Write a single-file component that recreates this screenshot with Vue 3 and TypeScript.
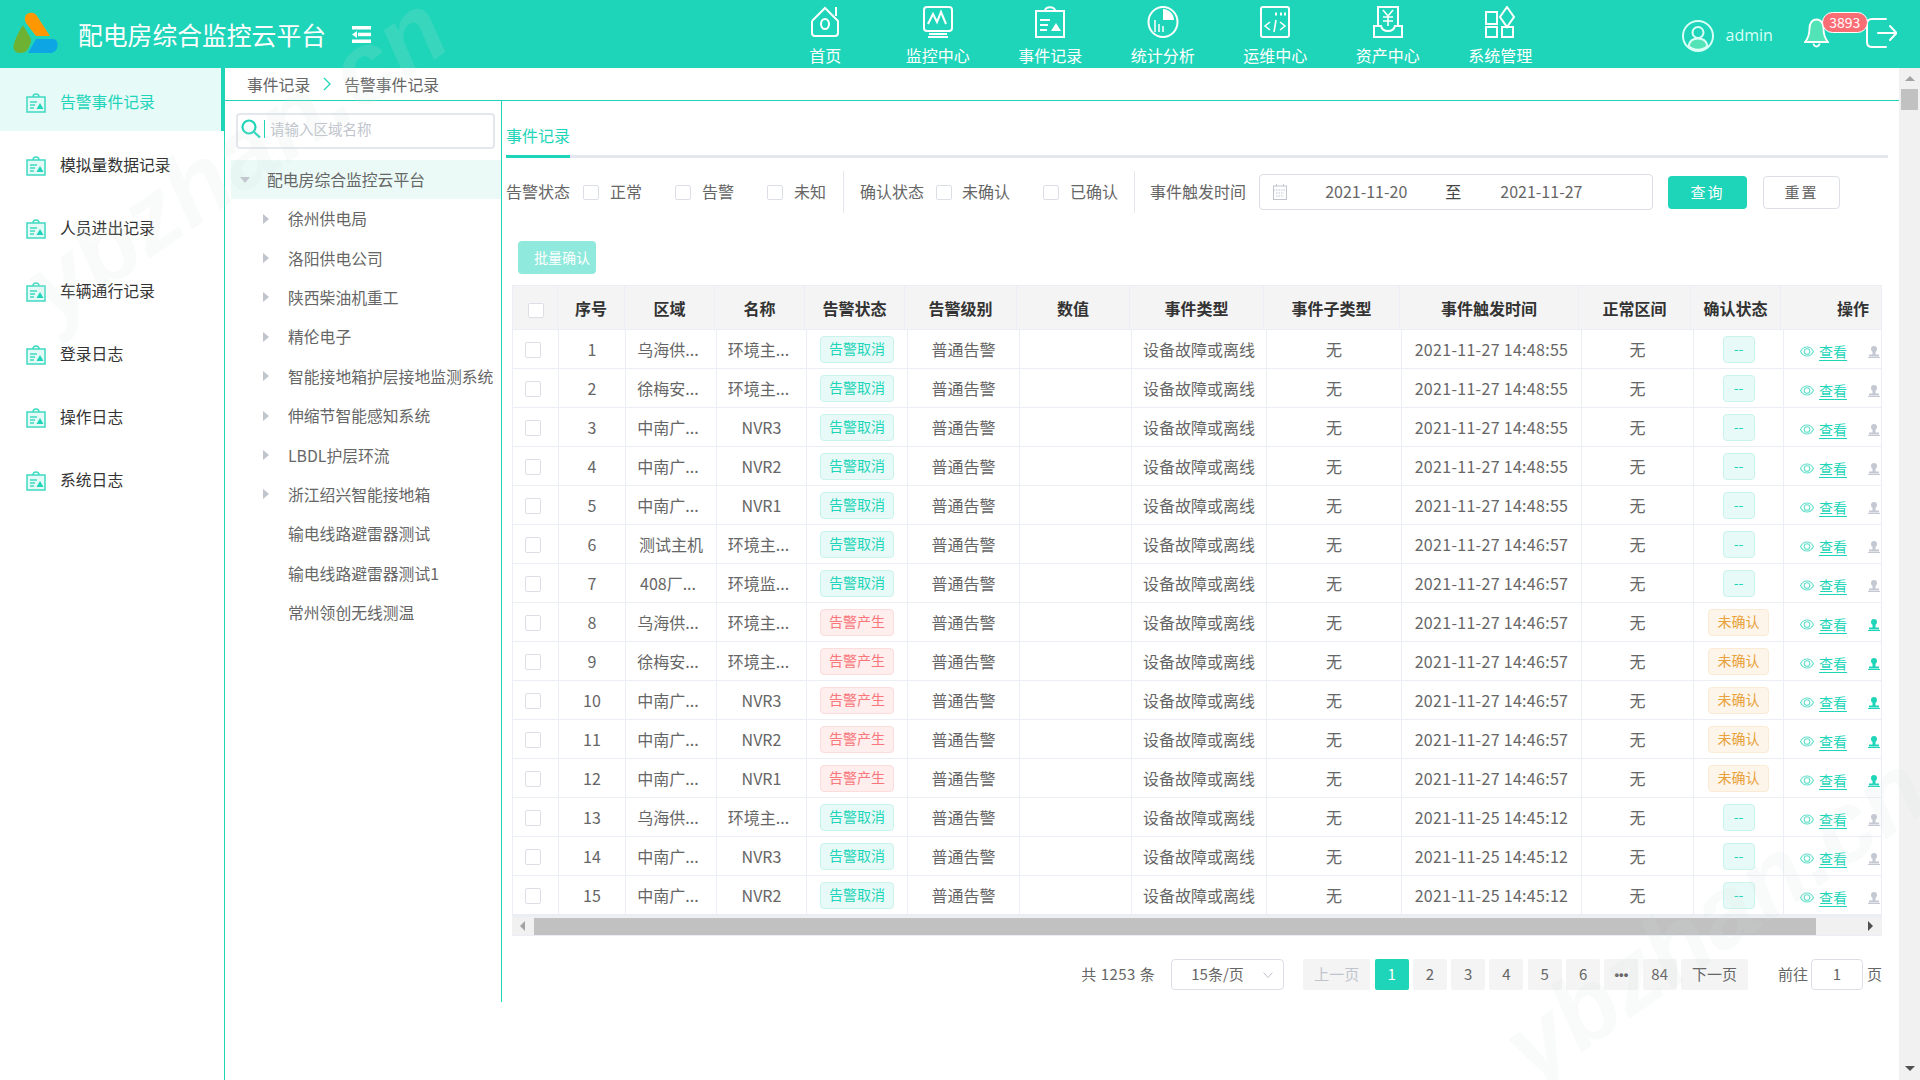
<template>
  <div class="page">
    <header class="top">
      <div class="brand">
        <svg class="logo" viewBox="0 0 46 42">
          <path d="M14 3c3-3.500 9-3 11 1l13 20H24L14 11c-1.500-2.500-1.500-6 0-8z" fill="#ff9800" />
          <path d="M11 13L18 25c2 3.500 1 6-1 10-2.500 5.500-5 6-9 6-5 0-7-3.500-6.500-7C3 27 7 19 11 13z" fill="#6eb233" />
          <path d="M24 27h16c5 0 6 3.500 5.500 7-.5 4.500-3.500 7-7.500 7H16z" fill="#0ea5e4" />
        </svg>
        <span class="title">配电房综合监控云平台</span>
        <svg class="fold" viewBox="0 0 19 17" fill="#fff">
          <rect x="0" y="0" width="19" height="3.500" />
          <rect x="6" y="6.700" width="13" height="3.500" />
          <rect x="0" y="13.500" width="19" height="3.500" />
          <path d="M0 8.500L5 5v7z" />
        </svg>
      </div>
      <nav class="nav">
        <div v-for="item in navItems" :key="item.name" class="nav-item">
          <svg class="nav-icon" viewBox="0 0 32 32" fill="none" stroke="#fff" stroke-width="2" v-html="item.icon"></svg>
          <span>{{ item.name }}</span>
        </div>
      </nav>
      <div class="user">
        <svg class="avatar" viewBox="0 0 32 32" fill="none" stroke="#d9fff6" stroke-width="2">
          <circle cx="16" cy="16" r="15" />
          <circle cx="16" cy="12.500" r="5.500" />
          <path d="M6.500 26c1-5 5-7.500 9.500-7.500s8.500 2.500 9.500 7.500c-5 5-14 5-19 0z" fill="#52e3b6" />
        </svg>
        <span class="name">admin</span>
        <div class="bell">
          <svg viewBox="0 0 25 30" fill="#52e3b6" stroke="#fff" stroke-width="1.800">
            <path d="M12.500 1.500c-4.500 0-7 4-7 9 0 6-1.500 10-4.500 13.500h23c-3-3.500-4.500-7.500-4.500-13.500 0-5-2.500-9-7-9z" />
            <path d="M9.500 25.500c.5 4 5.500 4 6 0" fill="none" />
          </svg>
          <span class="badge">3893</span>
        </div>
        <svg class="logout" viewBox="0 0 31 30" fill="none" stroke="#fff" stroke-width="2" stroke-linecap="round">
          <path d="M20 1H6C3 1 1 3 1 6v18c0 3 2 5 5 5h14" />
          <path d="M12 15h18M24 8l6.500 7-6.500 7" />
        </svg>
      </div>
    </header>

    <div class="main">
      <aside class="side">
        <div v-for="(name, i) in sideItems" :key="name" class="side-item" :class="{ active: i === 0 }">
          <svg class="side-icon" viewBox="0 0 20 20" fill="none" stroke="#3fdac2" stroke-width="1.500">
            <path d="M1 4h18v15H1z" fill="#e4faf6" />
            <path d="M7 4c0-4 6-4 6 0" />
            <path d="M4 9h7M4 12h5M4 15h4" />
            <path d="M14 10l3.500 6h-7z" fill="#1fd5b9" stroke="none" />
          </svg>
          <span>{{ name }}</span>
        </div>
      </aside>

      <div class="work">
        <div class="crumb">
          <span>事件记录</span>
          <svg class="crumb-sep" viewBox="0 0 8 14" fill="none" stroke="#1fd5b9" stroke-width="1.300">
            <path d="M1 1l6 6-6 6" />
          </svg>
          <span>告警事件记录</span>
        </div>

        <div class="panels">
          <section class="tree">
            <div class="search">
              <svg class="search-icon" viewBox="0 0 20 19" fill="none" stroke="#1fd5b9" stroke-width="2.200">
                <circle cx="8" cy="8" r="6.500" />
                <path d="M13 13l6 5.500" />
              </svg>
              <i class="caret"></i>
              <span>请输入区域名称</span>
            </div>
            <div class="tree-root">
              <i class="arrow-down"></i>
              <span>配电房综合监控云平台</span>
            </div>
            <div v-for="node in treeNodes" :key="node.name" class="tree-node">
              <i class="arrow-right" :class="{ leaf: node.leaf }"></i>
              <span>{{ node.name }}</span>
            </div>
          </section>

          <section class="content">
            <div class="tabs"><span class="tab">事件记录</span></div>

            <div class="filters">
              <span>告警状态</span>
              <label class="check first"><i class="box"></i>正常</label>
              <label class="check"><i class="box"></i>告警</label>
              <label class="check"><i class="box"></i>未知</label>
              <i class="split"></i>
              <span>确认状态</span>
              <label class="check first tight"><i class="box"></i>未确认</label>
              <label class="check"><i class="box"></i>已确认</label>
              <i class="split tail"></i>
              <span>事件触发时间</span>
              <div class="range">
                <svg class="cal" viewBox="0 0 14 16" fill="none" stroke="#c0c4cc" stroke-width="1">
                  <rect x=".5" y="2" width="13" height="13.500" />
                  <path d="M.5 6h13M3.500 0v3M10.500 0v3M3 9h8M3 12h8" stroke-dasharray="1.500 1" />
                </svg>
                <span class="from">2021-11-20</span>
                <span class="to">至</span>
                <span class="until">2021-11-27</span>
              </div>
              <button class="query">查询</button>
              <button class="reset">重置</button>
            </div>

            <button class="batch">批量确认</button>

            <div class="table">
              <div class="head">
                <div class="th"><i class="box"></i></div>
                <div v-for="col in columns" :key="col" class="th" :class="{ 'th-op': col === '操作' }">{{ col }}</div>
              </div>
              <div v-for="row in rows" :key="row.no" class="tr">
                <div class="td"><i class="box"></i></div>
                <div class="td">{{ row.no }}</div>
                <div class="td"><span :class="{ cut: row.area.endsWith('...') }">{{ row.area }}</span></div>
                <div class="td"><span :class="{ cut: row.name.endsWith('...') }">{{ row.name }}</span></div>
                <div class="td">
                  <span class="tag" :class="row.raised ? 'tag-red' : 'tag-green'">{{ row.raised ? '告警产生' : '告警取消' }}</span>
                </div>
                <div class="td">普通告警</div>
                <div class="td"></div>
                <div class="td">设备故障或离线</div>
                <div class="td">无</div>
                <div class="td stamp">{{ row.time }}</div>
                <div class="td">无</div>
                <div class="td">
                  <span v-if="row.raised" class="tag tag-orange">未确认</span>
                  <span v-else class="tag tag-green tag-none">--</span>
                </div>
                <div class="td td-op">
                  <svg class="eye" viewBox="0 0 14 11" fill="none" stroke="#63dfcb" stroke-width="1.100">
                    <path d="M.5 5.500C2 2.500 4.500 1 7 1s5 1.500 6.500 4.500C12 8.500 9.500 10 7 10S2 8.500 .5 5.500z" />
                    <circle cx="7" cy="5.500" r="2.800" />
                  </svg>
                  <span class="see">查看</span>
                  <svg class="stamp-icon" viewBox="0 0 12 12" :fill="row.raised ? '#1fd5b9' : '#c4c8d2'">
                    <circle cx="6" cy="3" r="3" />
                    <path d="M4.500 5h3v3.500h-3zM1 8.500h10V10.500H1zM0 11h12v1H0z" />
                  </svg>
                </div>
              </div>
              <div class="hscroll">
                <i class="arrow-left"></i>
                <div class="hthumb"></div>
                <i class="arrow-next"></i>
              </div>
            </div>

            <div class="pager">
              <span class="total">共 1253 条</span>
              <div class="size">
                <span>15条/页</span>
                <svg viewBox="0 0 10 6" fill="none" stroke="#c0c4cc" stroke-width="1"><path d="M.5.500L5 5.500 9.500.500" /></svg>
              </div>
              <div class="pages">
                <span class="pg wide off">上一页</span>
                <span v-for="p in pages" :key="p" class="pg" :class="{ on: p === '1', dots: p === '•••' }">{{ p }}</span>
                <span class="pg wide">下一页</span>
              </div>
              <span class="goto">前往</span>
              <div class="jump">1</div>
              <span class="unit">页</span>
            </div>
          </section>
        </div>
      </div>

      <div class="vscroll">
        <i class="up"></i>
        <div class="vthumb"></div>
        <i class="down"></i>
      </div>
    </div>

    <span class="mark mark-a">ybzhan.cn</span>
    <span class="mark mark-b">ybzhan.cn</span>
  </div>
</template>

<script setup lang="ts">
interface Row {
  no: number
  area: string
  name: string
  raised: boolean
  time: string
}

const navItems = [
  {
    name: '首页',
    icon: '<path d="M3 15L16 2l9 9M3 15v12c0 2 1 3 3 3h20c2 0 3-1 3-3V15l-4-4M27 1v9"/><ellipse cx="16" cy="18" rx="4" ry="5"/>',
  },
  {
    name: '监控中心',
    icon: '<rect x="2" y="1" width="28" height="24" rx="3"/><path d="M6 18l5-10 4 8 4-10 5 12"/><path d="M7 28h18M6 31h20" />',
  },
  {
    name: '事件记录',
    icon: '<rect x="2" y="5" width="28" height="26"/><path d="M11 5c0-5 10-5 10 0M6 14h10M6 19h8M6 24h7"/><path d="M22 17l5 8H17z" fill="#fff" stroke="none"/>',
  },
  {
    name: '统计分析',
    icon: '<ellipse cx="16" cy="16" rx="14.500" ry="15"/><path d="M16 3c6 0 11 5 11 11H16z" fill="#fff" stroke="none"/><path d="M8 26V14M12 26V18M16 26V20" stroke-width="1.500"/>',
  },
  {
    name: '运维中心',
    icon: '<rect x="2" y="1" width="28" height="30" rx="2"/><path d="M16 8h2M21 8h2M25 8h2" stroke-width="3"/><path d="M11 16l-5 4 5 4M21 16l5 4-5 4M17 14l-2 12" stroke-width="1.600"/>',
  },
  {
    name: '资产中心',
    icon: '<path d="M6 20V1h20v19"/><path d="M11 4l5 6 5-6M16 10v10M11 11h10M11 15h10" stroke-width="1.600"/><path d="M2 20h7c1 4 3 5 7 5s6-1 7-5h7v11H2z"/>',
  },
  {
    name: '系统管理',
    icon: '<rect x="2" y="6" width="11" height="12"/><path d="M23 1l7 10-7 10-7-10z"/><rect x="2" y="21" width="11" height="10"/><path d="M18 21v10h11V21z"/>',
  },
]

const sideItems = ['告警事件记录', '模拟量数据记录', '人员进出记录', '车辆通行记录', '登录日志', '操作日志', '系统日志']

const treeNodes = [
  { name: '徐州供电局' },
  { name: '洛阳供电公司' },
  { name: '陕西柴油机重工' },
  { name: '精伦电子' },
  { name: '智能接地箱护层接地监测系统' },
  { name: '伸缩节智能感知系统' },
  { name: 'LBDL护层环流' },
  { name: '浙江绍兴智能接地箱' },
  { name: '输电线路避雷器测试', leaf: true },
  { name: '输电线路避雷器测试1', leaf: true },
  { name: '常州领创无线测温', leaf: true },
]

const columns = ['序号', '区域', '名称', '告警状态', '告警级别', '数值', '事件类型', '事件子类型', '事件触发时间', '正常区间', '确认状态', '操作']

const pages = ['1', '2', '3', '4', '5', '6', '•••', '84']

const raw: [string, string, number, string][] = [
  ['乌海供...', '环境主...', 0, '2021-11-27 14:48:55'],
  ['徐梅安...', '环境主...', 0, '2021-11-27 14:48:55'],
  ['中南广...', 'NVR3', 0, '2021-11-27 14:48:55'],
  ['中南广...', 'NVR2', 0, '2021-11-27 14:48:55'],
  ['中南广...', 'NVR1', 0, '2021-11-27 14:48:55'],
  ['测试主机', '环境主...', 0, '2021-11-27 14:46:57'],
  ['408厂...', '环境监...', 0, '2021-11-27 14:46:57'],
  ['乌海供...', '环境主...', 1, '2021-11-27 14:46:57'],
  ['徐梅安...', '环境主...', 1, '2021-11-27 14:46:57'],
  ['中南广...', 'NVR3', 1, '2021-11-27 14:46:57'],
  ['中南广...', 'NVR2', 1, '2021-11-27 14:46:57'],
  ['中南广...', 'NVR1', 1, '2021-11-27 14:46:57'],
  ['乌海供...', '环境主...', 0, '2021-11-25 14:45:12'],
  ['中南广...', 'NVR3', 0, '2021-11-25 14:45:12'],
  ['中南广...', 'NVR2', 0, '2021-11-25 14:45:12'],
]

const rows: Row[] = raw.map((r, i) => ({
  no: i + 1,
  area: r[0],
  name: r[1],
  raised: r[2] === 1,
  time: r[3],
}))
</script>

<style>
html,
body {
  margin: 0;
  overflow: hidden;
}
</style>

<style scoped>
.page {
  position: relative;
  width: 1920px;
  height: 1080px;
  overflow: hidden;
  display: flex;
  flex-direction: column;
  font-family: "Noto Sans CJK SC", "Liberation Sans", sans-serif;
  font-size: 16px;
  color: #666;
  background: #fff;
}

.top {
  height: 68px;
  flex: none;
  display: flex;
  background: #1fd5b9;
  color: #fff;
}

.brand {
  width: 769px;
  display: flex;
  align-items: center;
  padding-left: 12px;
  box-sizing: border-box;
}

.logo {
  width: 46px;
  height: 42px;
  margin-top: -2px;
}

.title {
  margin-left: 20px;
  font-size: 24.800px;
  white-space: nowrap;
}

.fold {
  width: 19px;
  height: 17px;
  margin-left: 26px;
}

.nav {
  display: flex;
}

.nav-item {
  width: 112.5px;
  display: flex;
  flex-direction: column;
  align-items: center;
  padding-top: 6px;
  box-sizing: border-box;
  line-height: 20px;
}

.nav-icon {
  width: 32px;
  height: 32px;
  margin-bottom: 7px;
}

.user {
  display: flex;
  align-items: center;
  margin-left: 125px;
  position: relative;
}

.avatar {
  width: 32px;
  height: 32px;
  margin-top: 4px;
}

.name {
  margin-left: 12px;
  margin-top: 1px;
  color: #d9fff6;
  font-family: "Open Sans", sans-serif;
}

.bell {
  position: relative;
  width: 25px;
  height: 30px;
  margin-left: 31px;
  margin-top: -2px;
}

.bell svg {
  width: 25px;
  height: 30px;
}

.badge {
  position: absolute;
  left: 18px;
  top: -6px;
  width: 46px;
  height: 21px;
  box-sizing: border-box;
  border: 1px solid #fff;
  border-radius: 11px;
  background: #f96e75;
  font-size: 14px;
  line-height: 18px;
  text-align: center;
}

.logout {
  width: 31px;
  height: 30px;
  margin-left: 37px;
  margin-top: -2px;
}

.main {
  flex: 1;
  display: flex;
  min-height: 0;
}

.side {
  width: 225px;
  flex: none;
  box-sizing: border-box;
  border-right: 1px solid #1fd5b9;
  font-size: 15.800px;
}

.side-item {
  height: 63px;
  display: flex;
  align-items: center;
  padding: 6px 0 0 26px;
  box-sizing: border-box;
  color: #333;
}

.side-item span {
  padding-bottom: 2px;
}

.side-item.active {
  background: #e6faf7;
  color: #1fd5b9;
  box-shadow: inset -3px 0 0 #1fd5b9;
}

.side-icon {
  width: 20px;
  height: 20px;
  margin-right: 14px;
}

.work {
  flex: 1;
  min-width: 0;
  display: flex;
  flex-direction: column;
}

.crumb {
  height: 33px;
  flex: none;
  box-sizing: border-box;
  border-bottom: 1px solid #1fd5b9;
  display: flex;
  align-items: center;
  padding-left: 22px;
  font-size: 15.800px;
}

.crumb-sep {
  width: 8px;
  height: 14px;
  margin: 0 13px;
}

.panels {
  flex: 1;
  display: flex;
  min-height: 0;
}

.tree {
  width: 277px;
  height: 901px;
  flex: none;
  box-sizing: border-box;
  border-right: 1px solid #1fd5b9;
  font-size: 15.800px;
}

.search {
  width: 259px;
  height: 36px;
  margin: 12px 0 0 11px;
  box-sizing: border-box;
  border: 2px solid #e4e7ed;
  border-radius: 4px;
  display: flex;
  align-items: center;
  padding: 0 0 5px 3px;
  font-size: 14.500px;
  color: #c0c4cc;
}

.search-icon {
  width: 20px;
  height: 19px;
}

.caret {
  width: 1px;
  height: 18px;
  margin: 0 5px 0 3px;
  background: #1fd5b9;
}

.tree-root {
  height: 39px;
  margin: 11px 0 0 6px;
  display: flex;
  align-items: center;
  background: #ebfaf7;
}

.arrow-down {
  width: 0;
  height: 0;
  margin: 0 17px 0 9px;
  border-left: 5px solid transparent;
  border-right: 5px solid transparent;
  border-top: 6px solid #c0c4cc;
}

.tree-node {
  height: 39.400px;
  display: flex;
  align-items: center;
  padding-left: 38px;
  white-space: nowrap;
}

.arrow-right {
  width: 0;
  height: 0;
  margin-right: 19px;
  border-top: 5px solid transparent;
  border-bottom: 5px solid transparent;
  border-left: 6px solid #c0c4cc;
}

.arrow-right.leaf {
  visibility: hidden;
}

.content {
  flex: 1;
  min-width: 0;
  padding-left: 4px;
}

.tabs {
  width: 1382px;
  height: 57px;
  box-sizing: border-box;
  border-bottom: 3px solid #e4e7ed;
  display: flex;
}

.tab {
  height: 57px;
  box-sizing: border-box;
  border-bottom: 3px solid #1fd5b9;
  color: #1fd5b9;
  padding-top: 22px;
  line-height: 24px;
}

.filters {
  height: 36px;
  margin-top: 16px;
  display: flex;
  align-items: center;
  white-space: nowrap;
}

.filters > span,
.check,
.range span {
  padding-bottom: 2px;
}

.box {
  display: block;
  width: 16px;
  height: 15px;
  flex: none;
  box-sizing: border-box;
  background: #fff;
  border: 1px solid #dcdfe6;
  border-radius: 2px;
}

.check .box {
  margin-top: 3px;
}

.check {
  display: flex;
  align-items: center;
  gap: 11px;
  margin-left: 33px;
}

.check.first {
  margin-left: 13px;
}

.check.tight {
  gap: 10px;
  margin-left: 12px;
}

.split {
  width: 1px;
  height: 42px;
  margin: 0 16px 0 17px;
  background: #e4e7ed;
}

.split.tail {
  margin: 0 15px 0 16px;
}

.range {
  width: 394px;
  height: 36px;
  margin-left: 13px;
  box-sizing: border-box;
  border: 1px solid #dcdfe6;
  border-radius: 4px;
  display: flex;
  align-items: center;
  padding-left: 13px;
}

.cal {
  width: 14px;
  height: 16px;
}

.from {
  margin-left: 38px;
}

.to {
  margin-left: 38px;
  color: #444;
}

.until {
  margin-left: 39px;
}

.query,
.reset,
.batch {
  font-family: inherit;
  border-radius: 4px;
  box-sizing: border-box;
}

.query,
.reset {
  height: 33px;
  padding: 0 0 2px;
  font-size: 15px;
  letter-spacing: 2px;
}

.query {
  width: 79px;
  margin-left: 15px;
  border: none;
  background: #1fd5b9;
  color: #fff;
}

.reset {
  width: 77px;
  margin-left: 16px;
  border: 1px solid #dcdfe6;
  background: #fff;
  color: #666;
}

.batch {
  display: block;
  width: 78px;
  height: 33px;
  margin: 31px 0 0 12px;
  padding: 0 6px 2px 0;
  border: none;
  background: #8fe9dc;
  color: #fff;
  font-size: 14px;
  text-align: right;
}

.table {
  width: 1370px;
  margin: 11px 0 0 6px;
}

.head,
.tr {
  display: grid;
  box-sizing: border-box;
}

.head {
  grid-template-columns: 46px 67px 90px 90px 100px 112px 113px 134px 136px 179px 112px 90px 101px;
  height: 44px;
  background: #f4f4f4;
  border-top: 1px solid #ebeef5;
}

.th,
.td {
  display: flex;
  align-items: center;
  justify-content: center;
  box-sizing: border-box;
  border-right: 1px solid #ebeef5;
  white-space: nowrap;
}

.th {
  color: #333;
  font-weight: 700;
}

.th:first-child,
.td:first-child {
  border-left: 1px solid #ebeef5;
}

.th:first-child .box {
  margin: 5px 0 0 2px;
}

.th-op {
  justify-content: flex-end;
  padding-right: 12px;
}

.tr {
  grid-template-columns: 47px 67px 91px 90px 101px 112px 112px 135px 135px 180px 112px 90px 98px;
  height: 39px;
  border-top: 1px solid #ebeef5;
}

.td {
  padding-bottom: 1px;
}

.td:first-child .box {
  margin: 2px 5px 0 0;
  height: 16px;
}

.cut {
  margin-right: 6px;
}

.stamp {
  letter-spacing: 0.3px;
}

.tag {
  height: 27px;
  width: 74px;
  margin-top: 1px;
  box-sizing: border-box;
  border: 1px solid;
  border-radius: 4px;
  font-size: 14px;
  line-height: 23px;
  text-align: center;
}

.tag-green {
  background: #e8faf7;
  border-color: #c9f4ed;
  color: #1fd5b9;
}

.tag-none {
  width: 32px;
}

.tag-red {
  background: #feeeee;
  border-color: #fddcdc;
  color: #f9767a;
}

.tag-orange {
  width: 61px;
  background: #fdf5ea;
  border-color: #fbebd4;
  color: #e9a23b;
}

.td-op {
  justify-content: flex-start;
  padding: 5px 0 0 16px;
  overflow: hidden;
}

.eye {
  width: 14px;
  height: 11px;
  flex: none;
}

.see {
  margin-left: 5px;
  font-size: 14px;
  line-height: 18px;
  color: #1fd5b9;
  border-bottom: 1px solid #1fd5b9;
  flex: none;
}

.stamp-icon {
  width: 12px;
  height: 12px;
  margin-left: 21px;
  flex: none;
}

.hscroll {
  height: 22px;
  box-sizing: border-box;
  border-top: 3px solid #ebeef5;
  border-bottom: 1px solid #ebeef5;
  background: #f1f1f1;
  display: flex;
  align-items: center;
  padding-left: 8px;
}

.hthumb {
  width: 1282px;
  height: 17px;
  margin-left: 9px;
  background: #c1c1c1;
}

.arrow-left {
  width: 0;
  height: 0;
  border-top: 5px solid transparent;
  border-bottom: 5px solid transparent;
  border-right: 5px solid #a3a3a3;
}

.arrow-next {
  width: 0;
  height: 0;
  margin-left: 52px;
  border-top: 5px solid transparent;
  border-bottom: 5px solid transparent;
  border-left: 5px solid #505050;
}

.pager {
  width: 1370px;
  height: 31px;
  margin: 23px 0 0 6px;
  display: flex;
  align-items: center;
  justify-content: flex-end;
  font-size: 15px;
  white-space: nowrap;
}

.pager > span {
  padding-bottom: 2px;
}

.total {
  letter-spacing: 0.5px;
}

.size {
  width: 113px;
  height: 31px;
  margin-left: 16px;
  box-sizing: border-box;
  border: 1px solid #dcdfe6;
  border-radius: 4px;
  display: flex;
  align-items: center;
  padding-left: 19px;
}

.size span {
  padding-bottom: 2px;
}

.size svg {
  width: 10px;
  height: 6px;
  margin-left: 19px;
}

.pages {
  display: flex;
  gap: 4.300px;
  margin-left: 19px;
}

.pg {
  width: 34px;
  height: 31px;
  border-radius: 2px;
  background: #f4f4f5;
  line-height: 29px;
  text-align: center;
}

.pg.wide {
  width: 67px;
}

.pg.off {
  color: #c0c4cc;
}

.pg.on {
  background: #1fd5b9;
  color: #fff;
}

.pg.dots {
  font-family: "Liberation Sans", sans-serif;
  font-size: 13px;
  font-weight: 700;
  line-height: 31px;
}

.goto {
  margin-left: 30px;
}

.jump {
  width: 52px;
  height: 31px;
  margin-left: 3px;
  box-sizing: border-box;
  border: 1px solid #dcdfe6;
  border-radius: 4px;
  line-height: 27px;
  text-align: center;
}

.unit {
  margin-left: 4px;
}

.vscroll {
  width: 21px;
  flex: none;
  background: #f1f1f1;
  display: flex;
  flex-direction: column;
  align-items: center;
}

.up,
.down {
  width: 0;
  height: 0;
  border-left: 5px solid transparent;
  border-right: 5px solid transparent;
}

.up {
  margin-top: 8px;
  border-bottom: 5px solid #a3a3a3;
}

.down {
  margin-top: auto;
  margin-bottom: 9px;
  border-top: 5px solid #505050;
}

.vthumb {
  width: 17px;
  height: 21px;
  margin-top: 8px;
  background: #c1c1c1;
}

.mark {
  position: absolute;
  font-family: "Liberation Sans", sans-serif;
  font-style: italic;
  font-weight: 700;
  font-size: 100px;
  color: rgba(215, 226, 222, 0.14);
  transform: rotate(-35deg);
  pointer-events: none;
  white-space: nowrap;
}

.mark-a {
  left: -10px;
  top: 100px;
}

.mark-b {
  left: 1470px;
  top: 860px;
}
</style>
